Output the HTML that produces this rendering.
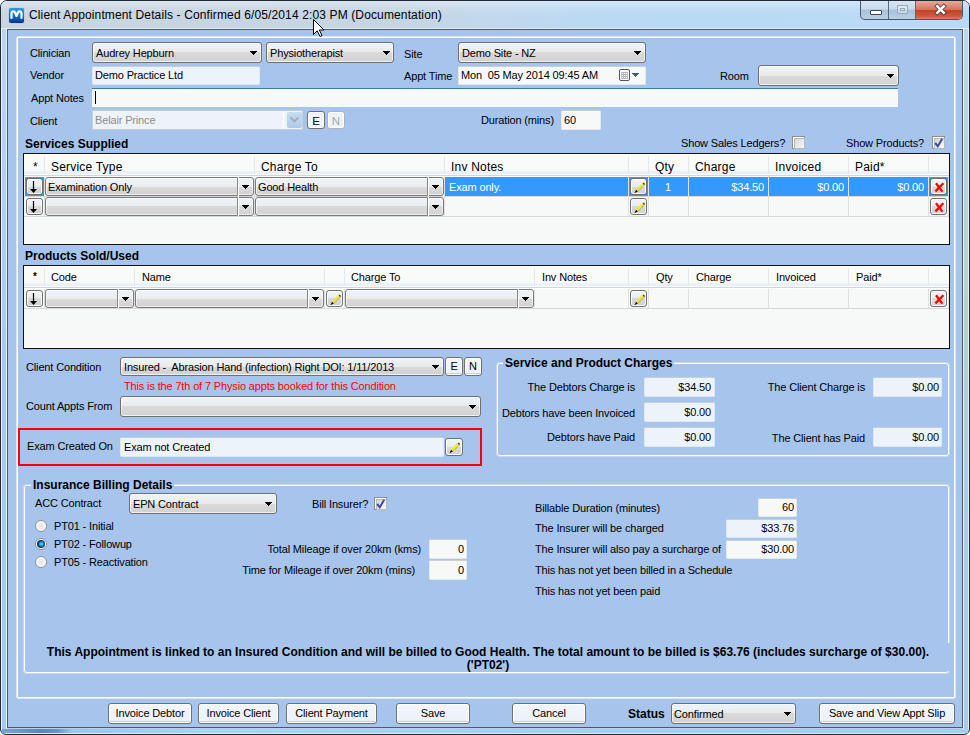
<!DOCTYPE html><html><head><meta charset="utf-8"><style>
*{box-sizing:border-box;margin:0;padding:0}
html,body{width:970px;height:735px;overflow:hidden;background:#fff;position:relative}
body{font-family:"Liberation Sans",sans-serif;font-size:11px;color:#000}
.a{position:absolute}
.l{position:absolute;white-space:pre;letter-spacing:-0.15px;font-size:11px}
.b{font-weight:bold;font-size:12px;letter-spacing:0}
.cb{position:absolute;border:1px solid #707070;border-radius:3px;
 background:linear-gradient(#E9F1FA 0%,#EDF1F6 22%,#ECECEC 30%,#EAEAEA 50%,#DADADA 50%,#D3D3D3 92%,#DCDCDC 100%);
 box-shadow:inset 0 0 0 1px rgba(255,255,255,.6)}
.ct{position:absolute;white-space:pre;letter-spacing:-0.15px;line-height:14px}
.ar{position:absolute}
.tb{position:absolute;background:#F7F9F9;border:1px solid #E4E9EE;border-top-color:#C9D0D6;border-radius:2px}
.tbr{position:absolute;background:#EDF3FA;border:1px solid #DFE7EF;border-top-color:#C6CED6;border-radius:2px}
.btn{position:absolute;border:1px solid #707070;border-radius:3px;text-align:center;white-space:nowrap;letter-spacing:-0.15px;
 background:linear-gradient(#F2F5FA,#EBF1F8);box-shadow:inset 0 0 0 1px #fff, inset 0 -2px 0 #D0D0D0}
.wb{position:absolute;border:1px solid #707070;border-radius:3px;
 background:linear-gradient(#F0F5FA 0%,#E9ECEF 50%,#D9D9D9 50%,#D2D2D2 100%);box-shadow:inset 0 0 0 1px rgba(255,255,255,.85)}
.gcb{position:absolute;border:1px solid #7A7A7A;border-radius:3px;
 background:linear-gradient(#EEF3F9 0%,#ECECEC 50%,#DADADA 50%,#D2D2D2 100%);box-shadow:inset 0 0 0 1px rgba(255,255,255,.6)}
.gbt{position:absolute;top:-1px;bottom:-1px;border-left:1px solid #8A8A8A;box-shadow:inset 1px 0 0 #fff}
.chk{position:absolute;width:13px;height:13px;border:1px solid #8F8F8F;background:#fff;box-shadow:inset 0 0 0 1px #fff}
.chk::before{content:"";position:absolute;left:1px;top:1px;width:9px;height:9px;border:1px solid #B4B9BE;background:linear-gradient(135deg,#D5D7D9,#F8F9F9)}
.rad{position:absolute;width:12px;height:12px;border-radius:50%;border:1px solid #8F8F8F;background:radial-gradient(circle at 50% 50%,#E2E3E4 0%,#F2F2F2 50%,#FFFFFF 62%,#FFFFFF 100%)}
.tbd{position:absolute;background:#EEF3FA;border:1px solid #C6D0DA}
.sb{position:absolute;border:1px solid #707070;border-radius:3px;text-align:center;background:#EEF3F9;box-shadow:inset 0 0 0 1px #fff;font-size:11.5px;padding-top:1px}
.dis{border-color:#ADB2B5;color:#A8A8A8}
</style></head><body>
<div class="a" style="left:0;top:0;width:970px;height:735px;border:1px solid #1F2A36;border-radius:7px 7px 6px 6px;background:linear-gradient(180deg,#C9E0F4 0px,#BBD6F0 30px,#B5D1EE 100%);box-shadow:inset 0 0 0 1px rgba(255,255,255,.55)"></div>
<div class="a" style="left:1px;top:1px;width:968px;height:28px;border-radius:6px 6px 0 0;background:linear-gradient(90deg,#C9D6E2 0%,#C6D5E3 40%,#C2D8EC 50%,#BBD9F4 62%,#B9DAF7 100%)"></div>
<div class="a" style="left:1px;top:1px;width:968px;height:28px;border-radius:6px 6px 0 0;background:linear-gradient(180deg,rgba(255,255,255,.35) 0px,rgba(255,255,255,.1) 8px,rgba(255,255,255,0) 14px,rgba(255,255,255,0) 100%)"></div>
<div class="a" style="left:1px;top:28px;width:968px;height:1px;background:rgba(255,255,255,.55)"></div>
<div class="l" style="top:8px;left:29px;font-size:12px;letter-spacing:0.13px">Client Appointment Details - Confirmed 6/05/2014 2:03 PM (Documentation)</div>
<div class="a" style="left:9px;top:8px;width:15px;height:15px;border-radius:2px;background:linear-gradient(#2A9BE8 0%,#0B6FD0 55%,#0554B4 75%,#02347E 100%);box-shadow:0 0 1px rgba(0,0,0,.4)"><svg width="15" height="15" style="position:absolute;left:0;top:0"><path d="M2.5 10V5.2C2.5 3.2 5.2 2.6 6.2 4.8L7.5 8.2L8.8 4.8C9.8 2.6 12.5 3.2 12.5 5.2V10" fill="none" stroke="#fff" stroke-width="2.2" stroke-linecap="round" stroke-linejoin="round"/></svg></div>
<div class="a" style="left:860px;top:1px;width:103px;height:19px;border:1px solid #4A5A6E;border-top:none;border-radius:0 0 5px 5px;overflow:hidden;background:linear-gradient(#D8E6F2 0%,#C8DAEC 45%,#A9C2DC 50%,#B9D0E6 100%)"><div class="a" style="left:27px;top:0;width:1px;height:19px;background:#5A6878"></div><div class="a" style="left:54px;top:0;width:1px;height:19px;background:#5A6878"></div><div class="a" style="left:55px;top:0;width:47px;height:19px;background:linear-gradient(#E9A99C 0%,#D7735E 45%,#C4412A 50%,#CE5A40 80%,#E08A70 100%)"></div><div class="a" style="left:9px;top:9px;width:12px;height:5px;background:#fff;border:1px solid #3A4550;border-radius:1px"></div><div class="a" style="left:36px;top:4px;width:11px;height:9px;border:1px solid #9AAAB8;background:rgba(255,255,255,.35)"><div class="a" style="left:2px;top:2px;width:5px;height:3px;border:1px solid #9AAAB8"></div></div><svg width="20" height="14" style="position:absolute;left:70px;top:2px"><path d="M6.3 3.3L12.7 9.7M12.7 3.3L6.3 9.7" stroke="#3A3A3A" stroke-opacity=".85" stroke-width="4.2" stroke-linecap="square"/><path d="M6.3 3.3L12.7 9.7M12.7 3.3L6.3 9.7" stroke="#FFFFFF" stroke-width="2.5" stroke-linecap="square"/></svg></div>
<div class="a" style="left:2px;top:729px;width:966px;height:4px;background:linear-gradient(90deg,#7DA3CC 0px,#5F86B3 40px,#6A92BE 55px,#9DC6EA 70px,#A9D3F2 200px,#A4CDEE 100%)"></div>
<div class="a" style="left:2px;top:30px;width:4px;height:699px;background:linear-gradient(#B9D6F0,#A8C9EA 50%,#A9CBEB)"></div>
<div class="a" style="left:6px;top:28px;width:1px;height:701px;background:rgba(235,245,252,.9)"></div>
<div class="a" style="left:1px;top:28px;width:1px;height:701px;background:rgba(235,245,252,.8)"></div>
<div class="a" style="left:964px;top:30px;width:4px;height:699px;background:linear-gradient(#B9D6F0,#B3D3C8 40%,#AACBEA 70%,#A9CBEB)"></div>
<div class="a" style="left:963px;top:28px;width:1px;height:701px;background:rgba(235,245,252,.9)"></div>
<div class="a" style="left:968px;top:28px;width:1px;height:701px;background:rgba(235,245,252,.8)"></div>
<div class="a" style="left:7px;top:29px;width:956px;height:699px;background:#A6C4EC;border:1px solid #4E5A66"></div>
<div class="a" style="left:16px;top:36px;width:940px;height:663px;border:1px solid #DCE6F0;border-radius:2px"></div>
<div class="a" style="left:17px;top:37px;width:938px;height:661px;border:1px solid #FFFFFF;border-radius:1px"></div>
<div class="l" style="top:47px;left:30px;">Clinician</div>
<div class="cb" style="left:92px;top:42px;width:170px;height:21px"><span class="ct" style="left:3px;top:3px;">Audrey Hepburn</span><svg class="ar" width="7" height="4" style="left:157px;top:8px"><path d="M0 0h7v1h-1v1h-1v1h-1v1h-1v-1h-1v-1h-1v-1h-1z" fill="#000" shape-rendering="crispEdges"/></svg></div>
<div class="cb" style="left:266px;top:42px;width:128px;height:21px"><span class="ct" style="left:3px;top:3px;">Physiotherapist</span><svg class="ar" width="7" height="4" style="left:116px;top:8px"><path d="M0 0h7v1h-1v1h-1v1h-1v1h-1v-1h-1v-1h-1v-1h-1z" fill="#000" shape-rendering="crispEdges"/></svg></div>
<div class="l" style="top:48px;left:404px;">Site</div>
<div class="cb" style="left:458px;top:42px;width:188px;height:21px"><span class="ct" style="left:3px;top:3px;">Demo Site - NZ</span><svg class="ar" width="7" height="4" style="left:175px;top:8px"><path d="M0 0h7v1h-1v1h-1v1h-1v1h-1v-1h-1v-1h-1v-1h-1z" fill="#000" shape-rendering="crispEdges"/></svg></div>
<div class="l" style="top:69px;left:30px;">Vendor</div>
<div class="tbr" style="left:92px;top:66px;width:168px;height:19px"><span class="ct" style="left:2px;top:1px;">Demo Practice Ltd</span></div>
<div class="l" style="top:70px;left:404px;">Appt Time</div>
<div class="tb" style="left:458px;top:66px;width:188px;height:19px"><span class="ct" style="left:2px;top:1px;">Mon  05 May 2014 09:45 AM</span></div>
<div class="a" style="left:619px;top:69px;width:11px;height:12px;border:1px solid #555;border-radius:2px;background:#fff"><div class="a" style="left:1px;top:2px;width:7px;height:7px;background:#B4B9C4"></div><svg width="9" height="10" style="position:absolute;left:0;top:0"><g fill="#fff"><rect x="2" y="3" width="1" height="1"/><rect x="4" y="3" width="1" height="1"/><rect x="6" y="3" width="1" height="1"/><rect x="2" y="5" width="1" height="1"/><rect x="4" y="5" width="1" height="1"/><rect x="6" y="5" width="1" height="1"/><rect x="2" y="7" width="1" height="1"/><rect x="4" y="7" width="1" height="1"/><rect x="6" y="7" width="1" height="1"/></g></svg></div>
<svg class="ar" width="7" height="4" style="left:632px;top:73px"><path d="M0 0h7v1h-1v1h-1v1h-1v1h-1v-1h-1v-1h-1v-1h-1z" fill="#3D5A80" shape-rendering="crispEdges"/></svg>
<div class="l" style="top:70px;left:720px;">Room</div>
<div class="cb" style="left:758px;top:65px;width:141px;height:21px"><span class="ct" style="left:3px;top:3px;"></span><svg class="ar" width="7" height="4" style="left:128px;top:8px"><path d="M0 0h7v1h-1v1h-1v1h-1v1h-1v-1h-1v-1h-1v-1h-1z" fill="#000" shape-rendering="crispEdges"/></svg></div>
<div class="l" style="top:92px;left:31px;">Appt Notes</div>
<div class="a" style="left:92px;top:88px;width:806px;height:19px;background:#F7F9F9;border-top:1px solid #3D7BAD"></div>
<div class="a" style="left:95px;top:91px;width:1px;height:13px;background:#000"></div>
<div class="l" style="top:115px;left:30px;">Client</div>
<div class="tbd" style="left:92px;top:110px;width:211px;height:20px"><span class="ct" style="left:2px;top:2px;color:#8D8D8D;">Belair Prince</span></div>
<div class="a" style="left:283px;top:111px;width:19px;height:18px;border-left:1px solid #fff"></div>
<div class="a" style="left:287px;top:112px;width:15px;height:16px;border-radius:2px;background:linear-gradient(#C8DCF2,#AECBEB)"><svg width="15" height="16" style="position:absolute;left:0;top:0"><path d="M3.5 5.5L7.5 9.5L11.5 5.5" fill="none" stroke="#A4AEBB" stroke-width="2"/></svg></div>
<div class="sb" style="left:307px;top:111px;width:18px;height:18px;line-height:16px;">E</div>
<div class="sb dis" style="left:327px;top:111px;width:18px;height:18px;line-height:16px;">N</div>
<div class="l" style="top:114px;left:481px;">Duration (mins)</div>
<div class="tb" style="left:561px;top:110px;width:40px;height:20px"><span class="ct" style="left:2px;top:2px;">60</span></div>
<div class="l b" style="top:137px;left:25px;">Services Supplied</div>
<div class="l" style="top:137px;left:681px;">Show Sales Ledgers?</div>
<div class="chk" style="left:792px;top:136px"></div>
<div class="l" style="top:137px;left:846px;">Show Products?</div>
<div class="chk" style="left:932px;top:136px"><svg width="13" height="13" style="position:absolute;left:-1px;top:-1px"><path d="M3.2 7L5.8 10.2L10.2 2.8" fill="none" stroke="#3B4FA0" stroke-width="2"/></svg></div>
<div class="l b" style="top:249px;left:25px;">Products Sold/Used</div>
<div class="a" style="left:23px;top:153px;width:927px;height:92px;border:1px solid #111;background:#F7F9F9"></div>
<div class="a" style="left:24px;top:154px;width:925px;height:23px;background:linear-gradient(#FAFBFB 0px,#F8F9F9 17px,#EAF1F8 17px,#EAF1F8 20px,#F8F9FA 20px,#F8F9FA 21px,#D3D6D9 21px,#D3D6D9 22px,#FDFDFD 22px)"></div>
<div class="a" style="left:44px;top:156px;width:1px;height:18px;background:#E3E8EE"></div>
<div class="a" style="left:254px;top:156px;width:1px;height:18px;background:#E3E8EE"></div>
<div class="a" style="left:444px;top:156px;width:1px;height:18px;background:#E3E8EE"></div>
<div class="a" style="left:628px;top:156px;width:1px;height:18px;background:#E3E8EE"></div>
<div class="a" style="left:648px;top:156px;width:1px;height:18px;background:#E3E8EE"></div>
<div class="a" style="left:688px;top:156px;width:1px;height:18px;background:#E3E8EE"></div>
<div class="a" style="left:768px;top:156px;width:1px;height:18px;background:#E3E8EE"></div>
<div class="a" style="left:848px;top:156px;width:1px;height:18px;background:#E3E8EE"></div>
<div class="a" style="left:928px;top:156px;width:1px;height:18px;background:#E3E8EE"></div>
<div class="l" style="top:160px;left:33px;font-size:12px;letter-spacing:0.2px">*</div>
<div class="l" style="top:160px;left:51px;font-size:12px;letter-spacing:0.2px">Service Type</div>
<div class="l" style="top:160px;left:261px;font-size:12px;letter-spacing:0.2px">Charge To</div>
<div class="l" style="top:160px;left:451px;font-size:12px;letter-spacing:0.2px">Inv Notes</div>
<div class="l" style="top:160px;left:655px;font-size:12px;letter-spacing:0.2px">Qty</div>
<div class="l" style="top:160px;left:695px;font-size:12px;letter-spacing:0.2px">Charge</div>
<div class="l" style="top:160px;left:775px;font-size:12px;letter-spacing:0.2px">Invoiced</div>
<div class="l" style="top:160px;left:855px;font-size:12px;letter-spacing:0.2px">Paid*</div>
<div class="a" style="left:24px;top:196px;width:925px;height:1px;background:#D8D8D8"></div>
<div class="a" style="left:24px;top:216px;width:925px;height:1px;background:#D8D8D8"></div>
<div class="a" style="left:44px;top:177px;width:1px;height:39px;background:#E0E0E0"></div>
<div class="a" style="left:254px;top:177px;width:1px;height:39px;background:#E0E0E0"></div>
<div class="a" style="left:444px;top:177px;width:1px;height:39px;background:#E0E0E0"></div>
<div class="a" style="left:628px;top:177px;width:1px;height:39px;background:#E0E0E0"></div>
<div class="a" style="left:648px;top:177px;width:1px;height:39px;background:#E0E0E0"></div>
<div class="a" style="left:688px;top:177px;width:1px;height:39px;background:#E0E0E0"></div>
<div class="a" style="left:768px;top:177px;width:1px;height:39px;background:#E0E0E0"></div>
<div class="a" style="left:848px;top:177px;width:1px;height:39px;background:#E0E0E0"></div>
<div class="a" style="left:928px;top:177px;width:1px;height:39px;background:#E0E0E0"></div>
<div class="a" style="left:948px;top:177px;width:1px;height:39px;background:#E0E0E0"></div>
<div class="a" style="left:25px;top:177px;width:19px;height:19px;background:#3399FF"></div>
<div class="a" style="left:445px;top:177px;width:183px;height:19px;background:#3399FF"></div>
<div class="a" style="left:629px;top:177px;width:19px;height:19px;background:#3399FF"></div>
<div class="a" style="left:649px;top:177px;width:39px;height:19px;background:#3399FF"></div>
<div class="a" style="left:689px;top:177px;width:79px;height:19px;background:#3399FF"></div>
<div class="a" style="left:769px;top:177px;width:79px;height:19px;background:#3399FF"></div>
<div class="a" style="left:849px;top:177px;width:79px;height:19px;background:#3399FF"></div>
<div class="a" style="left:929px;top:177px;width:19px;height:19px;background:#3399FF"></div>
<div class="wb" style="left:26px;top:178px;width:17px;height:17px"><svg width="17" height="17" style="position:absolute;left:-1px;top:-1px"><path d="M7.5 3v8" stroke="#000" stroke-width="1.2"/><path d="M4 11h7l-3.5 4z" fill="#000"/></svg></div>
<div class="wb" style="left:26px;top:198px;width:17px;height:17px"><svg width="17" height="17" style="position:absolute;left:-1px;top:-1px"><path d="M7.5 3v8" stroke="#000" stroke-width="1.2"/><path d="M4 11h7l-3.5 4z" fill="#000"/></svg></div>
<div class="gcb" style="left:45px;top:177px;width:209px;height:19px"><span class="ct" style="left:2px;top:2px">Examination Only</span><div class="gbt" style="left:191px;width:17px"></div><svg class="ar" width="7" height="4" style="left:196px;top:7px"><path d="M0 0h7v1h-1v1h-1v1h-1v1h-1v-1h-1v-1h-1v-1h-1z" fill="#000" shape-rendering="crispEdges"/></svg></div>
<div class="gcb" style="left:45px;top:197px;width:209px;height:19px"><div class="gbt" style="left:191px;width:17px"></div><svg class="ar" width="7" height="4" style="left:196px;top:7px"><path d="M0 0h7v1h-1v1h-1v1h-1v1h-1v-1h-1v-1h-1v-1h-1z" fill="#000" shape-rendering="crispEdges"/></svg></div>
<div class="gcb" style="left:255px;top:177px;width:189px;height:19px"><span class="ct" style="left:2px;top:2px">Good Health</span><div class="gbt" style="left:171px;width:17px"></div><svg class="ar" width="7" height="4" style="left:176px;top:7px"><path d="M0 0h7v1h-1v1h-1v1h-1v1h-1v-1h-1v-1h-1v-1h-1z" fill="#000" shape-rendering="crispEdges"/></svg></div>
<div class="gcb" style="left:255px;top:197px;width:189px;height:19px"><div class="gbt" style="left:171px;width:17px"></div><svg class="ar" width="7" height="4" style="left:176px;top:7px"><path d="M0 0h7v1h-1v1h-1v1h-1v1h-1v-1h-1v-1h-1v-1h-1z" fill="#000" shape-rendering="crispEdges"/></svg></div>
<div class="l" style="top:181px;left:449px;color:#FFFFFF;">Exam only.</div>
<div class="wb" style="left:630px;top:178px;width:17px;height:17px"><svg width="17" height="17" style="position:absolute;left:-1px;top:-1px"><path d="M7.9 13.4L14.6 6.7" stroke="#555" stroke-opacity=".55" stroke-width="1"/><path d="M6.8 12.4L13.6 5.6" stroke="#F2EE00" stroke-width="2.3"/><path d="M13.2 5.0L14.6 6.4" stroke="#3a3a3a" stroke-width="1.4"/><path d="M4.4 15.2L7.8 13.5L6.1 11.8Z" fill="#000"/></svg></div>
<div class="wb" style="left:630px;top:198px;width:17px;height:17px"><svg width="17" height="17" style="position:absolute;left:-1px;top:-1px"><path d="M7.9 13.4L14.6 6.7" stroke="#555" stroke-opacity=".55" stroke-width="1"/><path d="M6.8 12.4L13.6 5.6" stroke="#F2EE00" stroke-width="2.3"/><path d="M13.2 5.0L14.6 6.4" stroke="#3a3a3a" stroke-width="1.4"/><path d="M4.4 15.2L7.8 13.5L6.1 11.8Z" fill="#000"/></svg></div>
<div class="l" style="top:181px;left:665px;color:#FFFFFF;">1</div>
<div class="l" style="top:181px;right:206px;text-align:right;color:#FFFFFF;">$34.50</div>
<div class="l" style="top:181px;right:126px;text-align:right;color:#FFFFFF;">$0.00</div>
<div class="l" style="top:181px;right:46px;text-align:right;color:#FFFFFF;">$0.00</div>
<div class="wb" style="left:930px;top:178px;width:17px;height:17px"><svg width="17" height="17" style="position:absolute;left:-1px;top:-1px"><path d="M6 5.2L12.4 13.6M13.4 5.2L5.4 13.4" stroke="#FF0000" stroke-width="2.3"/></svg></div>
<div class="wb" style="left:930px;top:198px;width:17px;height:17px"><svg width="17" height="17" style="position:absolute;left:-1px;top:-1px"><path d="M6 5.2L12.4 13.6M13.4 5.2L5.4 13.4" stroke="#FF0000" stroke-width="2.3"/></svg></div>
<div class="a" style="left:23px;top:265px;width:927px;height:84px;border:1px solid #111;background:#F7F9F9"></div>
<div class="a" style="left:24px;top:266px;width:925px;height:23px;background:linear-gradient(#FAFBFB 0px,#F8F9F9 17px,#EAF1F8 17px,#EAF1F8 20px,#F8F9FA 20px,#F8F9FA 21px,#D3D6D9 21px,#D3D6D9 22px,#FDFDFD 22px)"></div>
<div class="a" style="left:44px;top:268px;width:1px;height:18px;background:#E3E8EE"></div>
<div class="a" style="left:134px;top:268px;width:1px;height:18px;background:#E3E8EE"></div>
<div class="a" style="left:324px;top:268px;width:1px;height:18px;background:#E3E8EE"></div>
<div class="a" style="left:344px;top:268px;width:1px;height:18px;background:#E3E8EE"></div>
<div class="a" style="left:534px;top:268px;width:1px;height:18px;background:#E3E8EE"></div>
<div class="a" style="left:628px;top:268px;width:1px;height:18px;background:#E3E8EE"></div>
<div class="a" style="left:648px;top:268px;width:1px;height:18px;background:#E3E8EE"></div>
<div class="a" style="left:688px;top:268px;width:1px;height:18px;background:#E3E8EE"></div>
<div class="a" style="left:768px;top:268px;width:1px;height:18px;background:#E3E8EE"></div>
<div class="a" style="left:848px;top:268px;width:1px;height:18px;background:#E3E8EE"></div>
<div class="a" style="left:928px;top:268px;width:1px;height:18px;background:#E3E8EE"></div>
<div class="l" style="top:271px;left:51px;">Code</div>
<div class="l" style="top:271px;left:142px;">Name</div>
<div class="l" style="top:271px;left:351px;">Charge To</div>
<div class="l" style="top:271px;left:542px;">Inv Notes</div>
<div class="l" style="top:271px;left:656px;">Qty</div>
<div class="l" style="top:271px;left:696px;">Charge</div>
<div class="l" style="top:271px;left:776px;">Invoiced</div>
<div class="l" style="top:271px;left:856px;">Paid*</div>
<div class="l" style="left:33px;top:271px;font-size:10px;font-weight:bold">*</div>
<div class="a" style="left:24px;top:308px;width:925px;height:1px;background:#D8D8D8"></div>
<div class="a" style="left:44px;top:289px;width:1px;height:19px;background:#E0E0E0"></div>
<div class="a" style="left:134px;top:289px;width:1px;height:19px;background:#E0E0E0"></div>
<div class="a" style="left:324px;top:289px;width:1px;height:19px;background:#E0E0E0"></div>
<div class="a" style="left:344px;top:289px;width:1px;height:19px;background:#E0E0E0"></div>
<div class="a" style="left:534px;top:289px;width:1px;height:19px;background:#E0E0E0"></div>
<div class="a" style="left:628px;top:289px;width:1px;height:19px;background:#E0E0E0"></div>
<div class="a" style="left:648px;top:289px;width:1px;height:19px;background:#E0E0E0"></div>
<div class="a" style="left:688px;top:289px;width:1px;height:19px;background:#E0E0E0"></div>
<div class="a" style="left:768px;top:289px;width:1px;height:19px;background:#E0E0E0"></div>
<div class="a" style="left:848px;top:289px;width:1px;height:19px;background:#E0E0E0"></div>
<div class="a" style="left:928px;top:289px;width:1px;height:19px;background:#E0E0E0"></div>
<div class="a" style="left:948px;top:289px;width:1px;height:19px;background:#E0E0E0"></div>
<div class="wb" style="left:26px;top:290px;width:17px;height:17px"><svg width="17" height="17" style="position:absolute;left:-1px;top:-1px"><path d="M7.5 3v8" stroke="#000" stroke-width="1.2"/><path d="M4 11h7l-3.5 4z" fill="#000"/></svg></div>
<div class="gcb" style="left:45px;top:289px;width:89px;height:19px"><div class="gbt" style="left:71px;width:17px"></div><svg class="ar" width="7" height="4" style="left:76px;top:7px"><path d="M0 0h7v1h-1v1h-1v1h-1v1h-1v-1h-1v-1h-1v-1h-1z" fill="#000" shape-rendering="crispEdges"/></svg></div>
<div class="gcb" style="left:135px;top:289px;width:189px;height:19px"><div class="gbt" style="left:171px;width:17px"></div><svg class="ar" width="7" height="4" style="left:176px;top:7px"><path d="M0 0h7v1h-1v1h-1v1h-1v1h-1v-1h-1v-1h-1v-1h-1z" fill="#000" shape-rendering="crispEdges"/></svg></div>
<div class="wb" style="left:326px;top:290px;width:17px;height:17px"><svg width="17" height="17" style="position:absolute;left:-1px;top:-1px"><path d="M7.9 13.4L14.6 6.7" stroke="#555" stroke-opacity=".55" stroke-width="1"/><path d="M6.8 12.4L13.6 5.6" stroke="#F2EE00" stroke-width="2.3"/><path d="M13.2 5.0L14.6 6.4" stroke="#3a3a3a" stroke-width="1.4"/><path d="M4.4 15.2L7.8 13.5L6.1 11.8Z" fill="#000"/></svg></div>
<div class="gcb" style="left:345px;top:289px;width:189px;height:19px"><div class="gbt" style="left:171px;width:17px"></div><svg class="ar" width="7" height="4" style="left:176px;top:7px"><path d="M0 0h7v1h-1v1h-1v1h-1v1h-1v-1h-1v-1h-1v-1h-1z" fill="#000" shape-rendering="crispEdges"/></svg></div>
<div class="wb" style="left:630px;top:290px;width:17px;height:17px"><svg width="17" height="17" style="position:absolute;left:-1px;top:-1px"><path d="M7.9 13.4L14.6 6.7" stroke="#555" stroke-opacity=".55" stroke-width="1"/><path d="M6.8 12.4L13.6 5.6" stroke="#F2EE00" stroke-width="2.3"/><path d="M13.2 5.0L14.6 6.4" stroke="#3a3a3a" stroke-width="1.4"/><path d="M4.4 15.2L7.8 13.5L6.1 11.8Z" fill="#000"/></svg></div>
<div class="wb" style="left:930px;top:290px;width:17px;height:17px"><svg width="17" height="17" style="position:absolute;left:-1px;top:-1px"><path d="M6 5.2L12.4 13.6M13.4 5.2L5.4 13.4" stroke="#FF0000" stroke-width="2.3"/></svg></div>
<div class="l" style="top:361px;left:26px;">Client Condition</div>
<div class="cb" style="left:120px;top:357px;width:324px;height:19px"><span class="ct" style="left:3px;top:2px;">Insured -  Abrasion Hand (infection) Right DOI: 1/11/2013</span><svg class="ar" width="7" height="4" style="left:311px;top:7px"><path d="M0 0h7v1h-1v1h-1v1h-1v1h-1v-1h-1v-1h-1v-1h-1z" fill="#000" shape-rendering="crispEdges"/></svg></div>
<div class="btn" style="left:445px;top:357px;width:18px;height:19px;line-height:17px;">E</div>
<div class="btn" style="left:464px;top:357px;width:18px;height:19px;line-height:17px;">N</div>
<div class="l" style="top:380px;left:124px;color:#FF0000;">This is the 7th of 7 Physio appts booked for this Condition</div>
<div class="l" style="top:400px;left:26px;">Count Appts From</div>
<div class="cb" style="left:120px;top:396px;width:361px;height:21px"><span class="ct" style="left:3px;top:3px;"></span><svg class="ar" width="7" height="4" style="left:348px;top:8px"><path d="M0 0h7v1h-1v1h-1v1h-1v1h-1v-1h-1v-1h-1v-1h-1z" fill="#000" shape-rendering="crispEdges"/></svg></div>
<div class="a" style="left:18px;top:428px;width:464px;height:38px;border:2px solid #FF0000"></div>
<div class="l" style="top:440px;left:27px;">Exam Created On</div>
<div class="tbr" style="left:120px;top:437px;width:324px;height:20px"><span class="ct" style="left:3px;top:2px;">Exam not Created</span></div>
<div class="wb" style="left:445px;top:438px;width:18px;height:18px"><svg width="17" height="17" style="position:absolute;left:-1px;top:-1px"><path d="M7.9 13.4L14.6 6.7" stroke="#555" stroke-opacity=".55" stroke-width="1"/><path d="M6.8 12.4L13.6 5.6" stroke="#F2EE00" stroke-width="2.3"/><path d="M13.2 5.0L14.6 6.4" stroke="#3a3a3a" stroke-width="1.4"/><path d="M4.4 15.2L7.8 13.5L6.1 11.8Z" fill="#000"/></svg></div>
<div class="a" style="left:496px;top:362px;width:454px;height:95px;border:1px solid rgba(255,255,255,.35);border-radius:3px"></div>
<div class="a" style="left:497px;top:363px;width:452px;height:93px;border:1px solid #FFFFFF;border-radius:3px"></div>
<div class="l b" style="left:503px;top:356px;background:#A6C4EC;padding:0 2px">Service and Product Charges</div>
<div class="l" style="top:381px;right:335px;text-align:right;">The Debtors Charge is</div>
<div class="l" style="top:407px;right:335px;text-align:right;">Debtors have been Invoiced</div>
<div class="l" style="top:431px;right:335px;text-align:right;">Debtors have Paid</div>
<div class="tbr" style="left:644px;top:377px;width:71px;height:20px"><span class="ct" style="right:3px;top:2px;">$34.50</span></div>
<div class="tbr" style="left:644px;top:402px;width:71px;height:20px"><span class="ct" style="right:3px;top:2px;">$0.00</span></div>
<div class="tbr" style="left:644px;top:427px;width:71px;height:20px"><span class="ct" style="right:3px;top:2px;">$0.00</span></div>
<div class="l" style="top:381px;right:105px;text-align:right;">The Client Charge is</div>
<div class="l" style="top:432px;right:105px;text-align:right;">The Client has Paid</div>
<div class="tbr" style="left:873px;top:377px;width:69px;height:20px"><span class="ct" style="right:2px;top:2px;">$0.00</span></div>
<div class="tbr" style="left:873px;top:427px;width:69px;height:20px"><span class="ct" style="right:2px;top:2px;">$0.00</span></div>
<div class="a" style="left:23px;top:484px;width:927px;height:190px;border:1px solid rgba(255,255,255,.35);border-radius:3px"></div>
<div class="a" style="left:24px;top:485px;width:925px;height:188px;border:1px solid #FFFFFF;border-radius:3px"></div>
<div class="a" style="left:940px;top:643px;width:13px;height:28px;background:#A6C4EC"></div>
<div class="l b" style="left:31px;top:478px;background:#A6C4EC;padding:0 2px">Insurance Billing Details</div>
<div class="l" style="top:497px;left:35px;">ACC Contract</div>
<div class="cb" style="left:129px;top:493px;width:148px;height:21px"><span class="ct" style="left:3px;top:3px;">EPN Contract</span><svg class="ar" width="7" height="4" style="left:135px;top:8px"><path d="M0 0h7v1h-1v1h-1v1h-1v1h-1v-1h-1v-1h-1v-1h-1z" fill="#000" shape-rendering="crispEdges"/></svg></div>
<div class="l" style="top:498px;left:312px;">Bill Insurer?</div>
<div class="chk" style="left:374px;top:497px"><svg width="13" height="13" style="position:absolute;left:-1px;top:-1px"><path d="M3.2 7L5.8 10.2L10.2 2.8" fill="none" stroke="#3B4FA0" stroke-width="2"/></svg></div>
<div class="rad" style="left:35px;top:520px"></div>
<div class="rad" style="left:35px;top:538px"></div>
<div class="rad" style="left:35px;top:556px"></div>
<div class="a" style="left:37px;top:540px;width:8px;height:8px;border-radius:50%;background:radial-gradient(circle at 55% 50%,#7FD8FF 0%,#2A98DE 28%,#0E4F86 50%,#0B2C50 75%,#102840 100%)"></div>
<div class="l" style="top:520px;left:54px;">PT01 - Initial</div>
<div class="l" style="top:538px;left:54px;">PT02 - Followup</div>
<div class="l" style="top:556px;left:54px;">PT05 - Reactivation</div>
<div class="l" style="top:543px;right:549px;text-align:right;">Total Mileage if over 20km (kms)</div>
<div class="l" style="top:564px;right:555px;text-align:right;">Time for Mileage if over 20km (mins)</div>
<div class="tb" style="left:429px;top:539px;width:38px;height:20px"><span class="ct" style="right:2px;top:2px;">0</span></div>
<div class="tb" style="left:429px;top:560px;width:38px;height:20px"><span class="ct" style="right:2px;top:2px;">0</span></div>
<div class="l" style="top:502px;left:535px;">Billable Duration (minutes)</div>
<div class="l" style="top:522px;left:535px;">The Insurer will be charged</div>
<div class="l" style="top:543px;left:535px;">The Insurer will also pay a surcharge of</div>
<div class="l" style="top:564px;left:535px;">This has not yet been billed in a Schedule</div>
<div class="l" style="top:585px;left:535px;">This has not yet been paid</div>
<div class="tb" style="left:758px;top:498px;width:39px;height:19px"><span class="ct" style="right:2px;top:1px;">60</span></div>
<div class="tbr" style="left:726px;top:519px;width:71px;height:19px"><span class="ct" style="right:2px;top:1px;">$33.76</span></div>
<div class="tb" style="left:726px;top:540px;width:71px;height:19px"><span class="ct" style="right:2px;top:1px;">$30.00</span></div>
<div class="l b" style="left:0;width:976px;top:646px;text-align:center;line-height:13px">This Appointment is linked to an Insured Condition and will be billed to Good Health. The total amount to be billed is $63.76 (includes surcharge of $30.00).<br>(&#39;PT02&#39;)</div>
<div class="btn" style="left:108px;top:703px;width:84px;height:21px;line-height:19px;">Invoice Debtor</div>
<div class="btn" style="left:198px;top:703px;width:81px;height:21px;line-height:19px;">Invoice Client</div>
<div class="btn" style="left:286px;top:703px;width:91px;height:21px;line-height:19px;">Client Payment</div>
<div class="btn" style="left:396px;top:703px;width:74px;height:21px;line-height:19px;">Save</div>
<div class="btn" style="left:512px;top:703px;width:74px;height:21px;line-height:19px;">Cancel</div>
<div class="l b" style="top:707px;left:628px;">Status</div>
<div class="cb" style="left:671px;top:703px;width:125px;height:21px"><span class="ct" style="left:2px;top:3px;">Confirmed</span><svg class="ar" width="7" height="4" style="left:112px;top:8px"><path d="M0 0h7v1h-1v1h-1v1h-1v1h-1v-1h-1v-1h-1v-1h-1z" fill="#000" shape-rendering="crispEdges"/></svg></div>
<div class="btn" style="left:819px;top:703px;width:136px;height:21px;line-height:19px;">Save and View Appt Slip</div>
<svg width="14" height="21" style="position:absolute;left:313px;top:19px"><path d="M0.5 0.5V15.5L4.2 11.8L7 17.5L9 16.5L6.3 11H11Z" fill="#fff" stroke="#000" stroke-width="1" stroke-linejoin="miter"/></svg>
</body></html>
